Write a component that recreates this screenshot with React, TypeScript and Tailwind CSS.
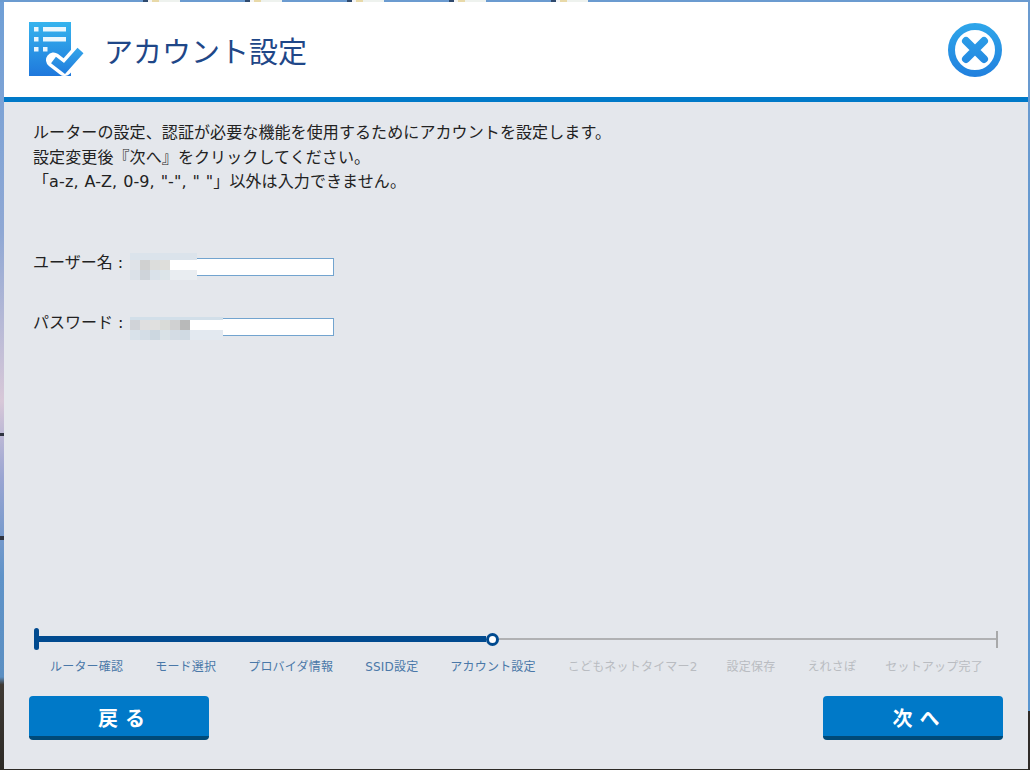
import React from "react";

const font = "font-['DejaVu_Sans','Noto_Sans_CJK_JP',sans-serif]";

const doneSteps = ["ルーター確認", "モード選択", "プロバイダ情報", "SSID設定", "アカウント設定"];
const nextSteps = [
  { label: "こどもネットタイマー2", cls: "" },
  { label: "設定保存", cls: "ml-[-3px]" },
  { label: "えれさぽ", cls: "" },
  { label: "セットアップ完了", cls: "ml-[-3px]" },
];

const userCells = [
  ["bg-[#dbe3eb]", "bg-[#dbe3eb]", "bg-[#dbe3eb]", "bg-[#dbe3eb]", "bg-[#dbe3eb]"],
  ["bg-[#dfe3e8]", "bg-[#d0d1d1]", "bg-[#dcdddc]", "bg-[#dededb]", "bg-white"],
  ["bg-[#dbe1e8]", "bg-[#cfd4da]", "bg-[#dae2ea]", "bg-[#dde5e9]", "bg-[#e9edf1]"],
];

const passCells = [
  ["bg-[#d2dfe9]", "bg-[#d2dfe9]", "bg-[#d2dfe9]", "bg-[#d2dfe9]", "bg-[#d2dfe9]", "bg-[#d2dfe9]", "bg-[#d2dfe9]"],
  ["bg-[#d0d3d8]", "bg-[#dfdfe0]", "bg-[#e0e0df]", "bg-[#d9dbd8]", "bg-[#d0d1d2]", "bg-[#b8b9b9]", "bg-white"],
  ["bg-[#d9e2ea]", "bg-[#d4dde6]", "bg-[#ccd7e0]", "bg-[#d9e1e6]", "bg-[#d4dce4]", "bg-[#d0dae3]", "bg-[#e3e9f0]"],
];

const Mosaic = ({ rows, top, first, last }: { rows: string[][]; top: string; first: string; last: string }) => (
  <div className={`absolute left-[-1px] flex flex-col ${top}`}>
    {rows.map((row, i) => (
      <div key={i} className={`flex ${i === 0 ? first : "h-[10px]"}`}>
        {row.map((c, j) => (
          <div key={j} className={`${j === row.length - 1 ? last : "w-[10px]"} ${c}`} />
        ))}
      </div>
    ))}
  </div>
);

const Field = ({ label, children }: { label: string; children: React.ReactNode }) => (
  <div className="flex items-center h-[18px]">
    <span className="w-[97px] text-[16px] text-[#222] mt-[-8px]">{label}</span>
    <div className="relative w-[204px] h-[18px] bg-white border border-[#72a4cf]">{children}</div>
  </div>
);

const PageIcon = () => (
  <svg width="56" height="56" viewBox="0 0 56 56">
    <defs>
      <linearGradient id="pg" x1="0" y1="0" x2="0" y2="1">
        <stop offset="0" stopColor="#36b4ee" />
        <stop offset="1" stopColor="#1f78dc" />
      </linearGradient>
      <linearGradient id="ck" gradientUnits="userSpaceOnUse" x1="0" y1="26" x2="0" y2="54">
        <stop offset="0" stopColor="#35a6ea" />
        <stop offset="1" stopColor="#1e78dc" />
      </linearGradient>
      <clipPath id="pc">
        <rect x="0" y="0" width="56" height="54" />
      </clipPath>
    </defs>
    <rect x="0" y="0" width="42" height="54" fill="url(#pg)" />
    <rect x="5" y="5" width="4.5" height="4.5" fill="#fff" opacity=".9" />
    <rect x="5" y="15" width="4.5" height="4.5" fill="#fff" opacity=".9" />
    <rect x="5" y="25" width="4.5" height="4.5" fill="#fff" opacity=".9" />
    <rect x="14" y="25" width="4.5" height="4.5" fill="#fff" opacity=".9" />
    <rect x="14" y="5" width="23" height="4.5" fill="#fff" opacity=".9" />
    <rect x="14" y="15" width="23" height="4.5" fill="#fff" opacity=".9" />
    <g clipPath="url(#pc)" fill="none">
      <path d="M24.5 38L35.5 46.5L51.5 28.5" stroke="#fff" strokeWidth="15" strokeLinejoin="round" strokeLinecap="round" />
      <path d="M24.5 38L35.5 46.5L51.5 28.5" stroke="url(#ck)" strokeWidth="8" />
    </g>
  </svg>
);

const CloseIcon = () => (
  <svg width="56" height="56" viewBox="0 0 56 56">
    <defs>
      <linearGradient id="cl" gradientUnits="userSpaceOnUse" x1="0" y1="1" x2="0" y2="55">
        <stop offset="0" stopColor="#2ea6ea" />
        <stop offset="1" stopColor="#2180de" />
      </linearGradient>
    </defs>
    <circle cx="28" cy="28" r="23.5" fill="none" stroke="url(#cl)" strokeWidth="7" />
    <path d="M19 19L37 37M37 19L19 37" stroke="url(#cl)" strokeWidth="8" strokeLinecap="round" />
  </svg>
);

const NavButton = ({ label, pad }: { label: string; pad: string }) => (
  <button className={`w-[180px] h-[44px] rounded-[4px] bg-[#0079c8] border-b-4 border-[#004a78] text-white text-[20px] font-bold flex items-center justify-center pt-[5px] ${pad}`}>
    {label}
  </button>
);

const TopTab = () => (
  <div className="w-[37px] h-full bg-[linear-gradient(90deg,#2f4a6e_0%,#2f4a6e_14%,#f4f4f4_14%,#f4f4f4_24%,#e8d9a8_24%,#e8d9a8_42%,#eef2ee_42%,#eef2ee_100%)]" />
);

export default function App() {
  return (
    <div className={`w-[1030px] h-[770px] flex flex-col overflow-hidden ${font}`}>
      <div className="h-[2px] bg-[#6b9bd0] flex pl-[143px] gap-[65px]">
        <TopTab />
        <TopTab />
        <TopTab />
        <TopTab />
        <TopTab />
      </div>
      <div className="flex-1 flex min-h-0">
        <div className="w-1 flex flex-col bg-[linear-gradient(180deg,#6f9fd6_0%,#8fa8d4_30%,#d8c8d8_52%,#9aa5d2_62%,#5f93c8_75%,#5b8fc2_88%,#3f3a34_89%,#2c2a26_100%)]">
          <div className="h-[3px] mt-[431px] bg-[#2f3440]" />
          <div className="h-[4px] mt-[100px] bg-[#2f3440]" />
        </div>
        <div className="flex-1 flex flex-col bg-[#e4e7ec]">
          <header className="h-[95px] bg-white flex items-center justify-between pl-[25px] pr-[25px]">
            <div className="flex items-center gap-[19px]">
              <PageIcon />
              <h1 className="text-[29px] leading-none text-[#1f4788] mt-[2px] font-['Noto_Sans_CJK_JP',sans-serif]">アカウント設定</h1>
            </div>
            <CloseIcon />
          </header>
          <div className="h-[5px] bg-[#0079c8]" />

          <main className="flex-1 flex flex-col pl-[29px] pr-[31px] pt-[19px]">
            <div className="text-[16px] leading-[24.5px] tracking-[0.1px] text-[#222]">
              <p>ルーターの設定、認証が必要な機能を使用するためにアカウントを設定します。</p>
              <p>設定変更後『次へ』をクリックしてください。</p>
              <p className="[word-spacing:0.7px]">「a-z, A-Z, 0-9, "-", " "」以外は入力できません。</p>
            </div>

            <div className="mt-[63px] flex flex-col gap-[42px]">
              <Field label="ユーザー名 :">
                <Mosaic rows={userCells} top="top-[-6px]" first="h-[7px]" last="w-[27px]" />
              </Field>
              <Field label="パスワード :">
                <Mosaic rows={passCells} top="top-[-2px]" first="h-[3px]" last="w-[33px]" />
              </Field>
            </div>

            <div className="mt-auto">
              <div className="flex items-center h-[22px] pl-px">
                <div className="w-[5px] h-[22px] rounded-full bg-[#004a8f]" />
                <div className="w-[447px] h-[6px] bg-[#004a8f]" />
                <div className="w-[13px] h-[13px] rounded-full border-[3px] border-[#004a8f] bg-white shrink-0" />
                <div className="flex-1 h-[2px] bg-[#b0b1b3]" />
                <div className="w-[2px] h-[17px] bg-[#a8a9aa] mr-[-1px]" />
              </div>
              <div className="flex gap-[32px] pl-[17px] mt-[8px] text-[12px] leading-[18px] tracking-[0.2px] whitespace-nowrap">
                {doneSteps.map((s) => (
                  <span key={s} className="text-[#4a78a8]">{s}</span>
                ))}
                {nextSteps.map((s) => (
                  <span key={s.label} className={`text-[#b9bcc1] ${s.cls}`}>{s.label}</span>
                ))}
              </div>
              <div className="flex justify-between mt-[20px] mb-[29px] ml-[-4px] mr-[-6px]">
                <NavButton label="戻 る" pad="pl-[5px]" />
                <NavButton label="次 へ" pad="pl-[6px]" />
              </div>
            </div>
          </main>
        </div>
        <div className="w-[2px] bg-[linear-gradient(180deg,#6b9bd0_0%,#5a96d0_92.5%,#2f2b28_92.5%,#2f2b28_100%)]" />
      </div>
      <div className="h-px bg-[#2c2a26]" />
    </div>
  );
}
